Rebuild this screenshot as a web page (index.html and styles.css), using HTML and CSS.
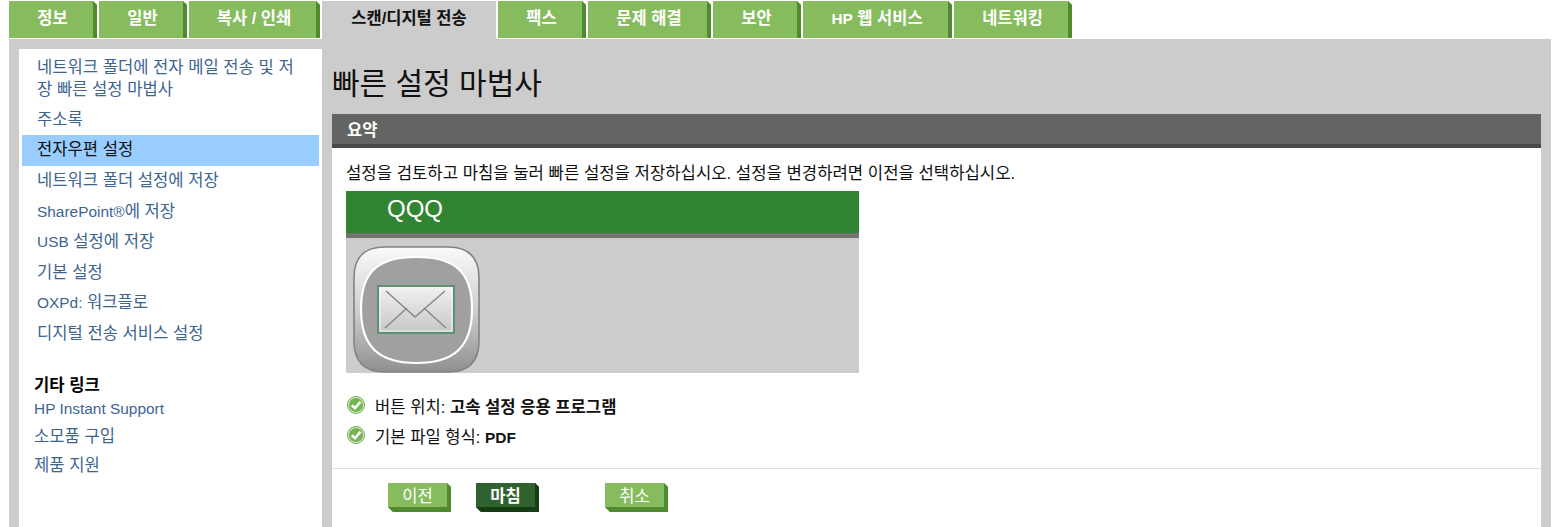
FILE: index.html
```html
<!DOCTYPE html>
<html lang="ko">
<head>
  <meta charset="UTF-8" />
  <title>빠른 설정 마법사</title>
  <link rel="stylesheet" href="styles.css">
</head>
<body>

<nav class="tabs">
  <a class="tab tab-info">정보</a>
  <a class="tab tab-general">일반</a>
  <a class="tab tab-copy">복사 / 인쇄</a>
  <a class="tab tab-scan active">스캔/디지털 전송</a>
  <a class="tab tab-fax">팩스</a>
  <a class="tab tab-trouble">문제 해결</a>
  <a class="tab tab-security">보안</a>
  <a class="tab tab-web"><span class="en">HP</span> 웹 서비스</a>
  <a class="tab tab-network">네트워킹</a>
</nav>

<div class="panel">
  <aside class="sidebar">
    <ul class="side-menu">
      <li><a>네트워크 폴더에 전자 메일 전송 및 저장 빠른 설정 마법사</a></li>
      <li><a>주소록</a></li>
      <li class="selected"><a>전자우편 설정</a></li>
      <li><a>네트워크 폴더 설정에 저장</a></li>
      <li><a><span class="en">SharePoint®</span>에 저장</a></li>
      <li><a><span class="en">USB</span> 설정에 저장</a></li>
      <li><a>기본 설정</a></li>
      <li><a><span class="en">OXPd:</span> 워크플로</a></li>
      <li><a>디지털 전송 서비스 설정</a></li>
    </ul>
    <h4 class="side-title">기타 링크</h4>
    <ul class="side-links">
      <li><a><span class="en">HP Instant Support</span></a></li>
      <li><a>소모품 구입</a></li>
      <li><a>제품 지원</a></li>
    </ul>
  </aside>

  <main class="main">
    <h1 class="page-title">빠른 설정 마법사</h1>
    <div class="card">
      <div class="card-head">요약</div>
      <div class="card-body">
        <p class="intro">설정을 검토하고 마침을 눌러 빠른 설정을 저장하십시오. 설정을 변경하려면 이전을 선택하십시오.</p>
        <div class="preview">
          <div class="preview-title">QQQ</div>
          <div class="preview-area">
            <svg class="app-icon" width="127" height="127" viewBox="0 0 127 127">
              <defs>
                <linearGradient id="shell" x1="0" y1="0" x2="0" y2="1">
                  <stop offset="0" stop-color="#fafafa"/>
                  <stop offset="0.5" stop-color="#cfcfcf"/>
                  <stop offset="1" stop-color="#8f8f8f"/>
                </linearGradient>
                <linearGradient id="paper" x1="0" y1="0" x2="0" y2="1">
                  <stop offset="0" stop-color="#f2f2f2"/>
                  <stop offset="1" stop-color="#c6c6c6"/>
                </linearGradient>
              </defs>
              <path d="M32 1H95C116 1 126 11 126 32V95C126 116 116 126 95 126H32C11 126 1 116 1 95V32C1 11 11 1 32 1Z" fill="url(#shell)" stroke="#838383" stroke-width="1.6"/>
              <path d="M63.5 11C101 11 119 25 119 63C119 101 101 117 63.5 117C26 117 8 101 8 63C8 25 26 11 63.5 11Z" fill="#a0a0a0" stroke="#fff" stroke-width="2.2"/>
              <rect x="25" y="40" width="76" height="47" fill="url(#paper)" stroke="#5c9271" stroke-width="2"/>
              <rect x="27" y="42" width="72" height="43" fill="none" stroke="#f4f4f4" stroke-width="1"/>
              <path d="M33 45L62 71L92 45" fill="none" stroke="#8a8a8a" stroke-width="1.6"/>
              <path d="M32 82L54 62M93 82L71 62" fill="none" stroke="#8a8a8a" stroke-width="1.6"/>
            </svg>
          </div>
        </div>
        <ul class="facts">
          <li>
            <svg class="check" width="18" height="18" viewBox="0 0 18 18">
              <circle cx="9" cy="9" r="8.5" fill="#d9e9cd" stroke="#6fae4f" stroke-width="1"/>
              <circle cx="9" cy="9" r="7" fill="#74b552"/>
              <path d="M4.8 9.2L8 12.2L13.4 5.8" fill="none" stroke="#fff" stroke-width="2.6"/>
            </svg>
            <span>버튼 위치: <b>고속 설정 응용 프로그램</b></span>
          </li>
          <li>
            <svg class="check" width="18" height="18" viewBox="0 0 18 18">
              <circle cx="9" cy="9" r="8.5" fill="#d9e9cd" stroke="#6fae4f" stroke-width="1"/>
              <circle cx="9" cy="9" r="7" fill="#74b552"/>
              <path d="M4.8 9.2L8 12.2L13.4 5.8" fill="none" stroke="#fff" stroke-width="2.6"/>
            </svg>
            <span>기본 파일 형식: <b class="en">PDF</b></span>
          </li>
        </ul>
      </div>
      <div class="card-foot">
        <button class="btn">이전</button>
        <button class="btn primary">마침</button>
        <button class="btn cancel">취소</button>
      </div>
    </div>
  </main>
</div>

</body>
</html>
```

FILE: styles.css
```css
html, body {
  height: 100%;
}
body {
  margin: 0;
  background: white;
  font-family: "Liberation Sans", "Noto Sans CJK KR", sans-serif;
  font-size: 16.6px;
  color: #111;
  display: flex;
  flex-direction: column;
  overflow: hidden;
}
ul {
  list-style: none;
  margin: 0;
  padding: 0;
}
/* latin runs are set a bit smaller than the hangul around them */
.en {
  font-size: 0.93em;
}

/* tabs */
.tabs {
  display: flex;
  height: 39px;
  padding: 1px 0 0 9px;
  box-sizing: border-box;
  flex: none;
  align-items: flex-start;
}
.tab {
  box-sizing: border-box;
  height: 37px;
  margin-right: 2px;
  padding: 4px 0 0 3px;
  background: #86bc5e;
  border-right: 4px solid #4f8a31;
  color: white;
  font-weight: bold;
  font-size: 16.5px;
  text-align: center;
  clip-path: polygon(0 0, calc(100% - 4px) 0, 100% 4px, 100% 100%, 0 100%);
}
.tab-info { width: 88px; }
.tab-general { width: 88px; }
.tab-copy { width: 131px; }
.tab-fax { width: 88px; }
.tab-trouble { width: 123px; }
.tab-security { width: 88px; }
.tab-web { width: 149px; }
.tab-network { width: 118px; }
.tab.active {
  width: 174px;
  height: 39px;
  margin-right: 2px;
  padding: 4px 0 0 0;
  background: #cccccc;
  border-right: 0;
  color: #111;
  clip-path: none;
}

/* grey frame */
.panel {
  flex: 1;
  display: flex;
  gap: 10px;
  margin: 0 9px;
  padding: 10px 10px 0 10px;
  background: #cccccc;
  min-height: 0;
}

/* left column */
.sidebar {
  width: 303px;
  flex: none;
  box-sizing: border-box;
  background: white;
  padding: 4px 3px 0 3px;
}
.side-menu a, .side-links a {
  color: #3d6590;
}
.side-menu li {
  padding: 4.3px 15px;
  line-height: 22px;
}
.side-menu li:first-child {
  padding-bottom: 3.3px;
}
.side-menu li.selected {
  background: #99ccff;
}
.side-menu li.selected a {
  color: #111;
}
.side-title {
  margin: 27px 0 0 12px;
  font-size: 16.6px;
  line-height: 20px;
  color: black;
}
.side-links li {
  padding-left: 12px;
  line-height: 29px;
}
.side-links li:first-child {
  line-height: 26px;
}

/* right column */
.main {
  flex: 1;
  min-width: 0;
  display: flex;
  flex-direction: column;
}
.page-title {
  margin: 0;
  height: 65px;
  padding-top: 17px;
  box-sizing: border-box;
  font-size: 30px;
  line-height: 36px;
  font-weight: normal;
  color: #111;
}
.card {
  flex: 1;
  min-height: 0;
  background: white;
}
.card-head {
  height: 34px;
  box-sizing: border-box;
  padding: 3px 0 0 15px;
  background: #636562;
  border-bottom: 4px solid #494a48;
  color: white;
  font-weight: bold;
  font-size: 16.5px;
}
.card-body {
  height: 320px;
  box-sizing: border-box;
  padding: 15px 14px 0 14px;
}
.intro {
  margin: 0;
  height: 28px;
  line-height: 22px;
  font-size: 16.68px;
}
.preview {
  width: 513px;
  background: #cccccc;
}
.preview-title {
  height: 47px;
  box-sizing: border-box;
  padding: 0 0 0 41px;
  background: #318532;
  border-bottom: 5px solid #737373;
  color: white;
  font-size: 24px;
  line-height: 36px;
}
.preview-area {
  height: 135px;
  padding: 8px 0 0 7px;
  box-sizing: border-box;
}
.app-icon {
  display: block;
}
.facts {
  margin-top: 22px;
}
.facts li {
  display: flex;
  align-items: center;
  gap: 10px;
  height: 19px;
  margin: 0 0 11px 1px;
}
.facts span {
  padding-top: 2px;
}
.check {
  flex: none;
}
.card-foot {
  display: flex;
  border-top: 1px solid #e2e2e2;
  padding: 14px 0 0 56px;
}
.btn {
  box-sizing: border-box;
  width: 63px;
  height: 29px;
  padding: 0 0 7px 0;
  margin-right: 25px;
  background: #86bc5e;
  border: 0;
  border-right: 4px solid #4f8a31;
  border-bottom: 5px solid #4f8a31;
  color: white;
  font-family: inherit;
  font-size: 16.6px;
  clip-path: polygon(0 0, calc(100% - 4px) 0, 100% 4px, 100% 100%, 5px 100%, 0 calc(100% - 5px));
}
.btn.primary {
  background: #30622f;
  border-color: #143d14;
  font-weight: bold;
  margin-right: 66px;
}
```
